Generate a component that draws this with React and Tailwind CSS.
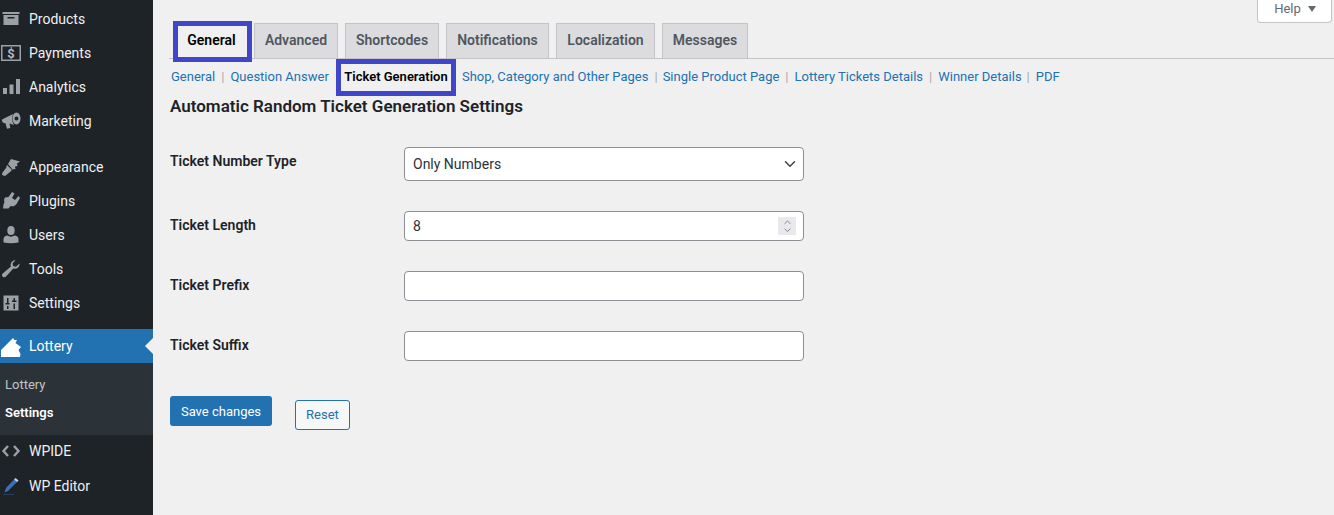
import { ChevronDown, ChevronUp } from 'lucide-react'

const Products = () => (
  <svg viewBox="0 0 20 20" className="w-5 h-5" fill="currentColor">
    <path d="M1.500 3h17v2h-17z" />
    <path fillRule="evenodd" d="M2.500 6h15v10h-15zM6.500 8v1.500h7V8z" />
  </svg>
)
const Payments = () => (
  <svg viewBox="0 0 20 20" className="w-5 h-5" fill="currentColor">
    <path fillRule="evenodd" d="M0 2h20v16H0zM1.500 3.500v13h17v-13z" />
    <text x="10" y="14.500" textAnchor="middle" fontSize="13" fontWeight="700" fill="#b4b8bc" fontFamily="Roboto">$</text>
  </svg>
)
const Analytics = () => (
  <svg viewBox="0 0 20 20" className="w-5 h-5" fill="currentColor">
    <path d="M2 11h4v6H2zM8.500 7.500h4V17h-4zM15 2h4v15h-4z" />
  </svg>
)
const Marketing = () => (
  <svg viewBox="0 0 20 20" className="w-5 h-5" fill="currentColor">
    <path d="M1 8.500 12 3c-1.300 3.500-1.300 7.500 1 11l-4.500-1.500.8 4.500-3.300.8-1.500-5.500C2 12.500 0.500 10.500 1 8.500z" />
    <path fillRule="evenodd" d="M15.500 1.500c2.200 0 4 2.800 4 6s-1.800 6-4 6-4-2.800-4-6 1.800-6 4-6zM15.500 5.500a2 2 0 1 0 0 4 2 2 0 0 0 0-4z" />
  </svg>
)
const Appearance = () => (
  <svg viewBox="0 0 20 20" className="w-5 h-5" fill="currentColor">
    <path d="M10 2l9 2.500-3 2 .5 2.500-2.500.5.500 2.500-3 .5L7 7z" />
    <path d="M6 8l5 5-2 2-5 4-3-1 .5-2.500L5 11z" />
  </svg>
)
const Plugins = () => (
  <svg viewBox="0 0 20 20" className="w-5 h-5" fill="currentColor">
    <path d="M11 1l2.500 1.500-2.500 4.500 3 2 3.500-4 1.500 2-3.500 6c-1.500 2-4 2.800-6 2l-2 2.500H2l.5-4L3.500 11c-.7-1.500-.5-3 .5-4.500L7.500 6z" />
  </svg>
)
const Users = () => (
  <svg viewBox="0 0 20 20" className="w-5 h-5" fill="currentColor">
    <ellipse cx="10" cy="5.500" rx="3.700" ry="4.500" />
    <path d="M2.500 17.500v-3.500c0-2 2-3.500 4-3.500 2 1.500 5 1.500 7 0 2 0 4 1.500 4 3.500v3.500c-4.500 1-10.500 1-15 0z" />
  </svg>
)
const Tools = () => (
  <svg viewBox="0 0 20 20" className="w-5 h-5" fill="currentColor">
    <path d="M18.500 4.500c.3 2.500-1.500 5-4 5.200-.8.100-1.500 0-2.200-.3L5 17.500c-1 1-2.400 1-3.300.2-.9-.9-.9-2.300 0-3.200l8.200-7c-.3-.7-.4-1.500-.3-2.300.3-2.300 2.500-4.200 5-4l-3 3 .5 2.800 2.800.7z" />
  </svg>
)
const Settings = () => (
  <svg viewBox="0 0 20 20" className="w-5 h-5" fill="currentColor">
    <path fillRule="evenodd" d="M2.500 2.500h15v15h-15zM6 5v5H4.500v1.500h4V10H7.500V5zM12.500 5v2.500H11V9h4.500V7.500H14V5zM6 13v3h1.500v-3zM12.500 10.500V16H14v-5.500z" />
  </svg>
)
const Ticket = () => (
  <svg viewBox="0 0 22 22" className="w-[22px] h-[22px]" fill="currentColor">
    <path d="M1 22v-7L13 3l1.500 2H17l-1.500 3L21 12l-2.500 3 2 4-.5 3z" />
  </svg>
)
const Code = () => (
  <svg viewBox="0 0 20 20" className="w-5 h-5" fill="none" stroke="currentColor" strokeWidth="2.400">
    <path d="M7 5l-4.500 5L7 15M13 5l4.500 5L13 15" />
  </svg>
)
const Pencil = () => (
  <svg viewBox="0 0 20 20" className="w-5 h-5">
    <path d="M14.500 2l3 2.500L7 15l-3.500 1.500L5 12z" fill="#3a6fc0" />
    <path d="M14.500 2l3 2.500-1.500 1.500-3-2.500z" fill="#c6cbd2" />
    <path d="M2 18h11v1H2z" fill="#2a3f5f" />
  </svg>
)

const menuTop = [
  ['Products', Products],
  ['Payments', Payments],
  ['Analytics', Analytics],
  ['Marketing', Marketing],
]
const menuMid = [
  ['Appearance', Appearance],
  ['Plugins', Plugins],
  ['Users', Users],
  ['Tools', Tools],
  ['Settings', Settings],
]

function MenuItem({ label, Icon }) {
  return (
    <div className="flex items-center h-[34px] text-[#f0f0f1]">
      <div className="w-[20px] ml-[1px] mr-[8px] flex justify-center text-[#9ca1a6] shrink-0">
        <Icon />
      </div>
      <span>{label}</span>
    </div>
  )
}

function Sidebar() {
  return (
    <div className="w-[153px] shrink-0 bg-[#1d2327] pt-[2px] text-[14px]">
      {menuTop.map(([label, Icon]) => <MenuItem key={label} label={label} Icon={Icon} />)}
      <div className="h-[12px]" />
      {menuMid.map(([label, Icon]) => <MenuItem key={label} label={label} Icon={Icon} />)}
      <div className="h-[9px]" />
      <div className="relative flex items-center h-[34px] bg-[#2271b1] text-white">
        <div className="w-[29px] flex justify-start shrink-0">
          <Ticket />
        </div>
        <span>Lottery</span>
        <div className="absolute right-0 top-[9px] w-0 h-0 border-y-[8px] border-y-transparent border-r-[8px] border-r-[#f0f0f1]" />
      </div>
      <div className="h-[72px] bg-[#2c3338] pt-[8px] pl-[5px] text-[13px]">
        <div className="h-[28px] flex items-center text-[#c3c4c7]">Lottery</div>
        <div className="h-[28px] flex items-center font-semibold text-white">Settings</div>
      </div>
      <div className="-mt-[1px]">
        <MenuItem label="WPIDE" Icon={Code} />
      </div>
      <div className="mt-[1px]">
        <MenuItem label="WP Editor" Icon={Pencil} />
      </div>
    </div>
  )
}

const tabs = [
  ['Advanced', 'w-[84px] ml-[2px]'],
  ['Shortcodes', 'w-[94px] ml-[7px]'],
  ['Notifications', 'w-[103px] ml-[7px]'],
  ['Localization', 'w-[99px] ml-[7px]'],
  ['Messages', 'w-[86px] ml-[7px]'],
]

function Tabs() {
  return (
    <div className="flex h-[38px] ml-[16px] pl-[4px] border-b border-[#c3c4c7] text-[14px] font-semibold">
      <div className="relative z-10 w-[79px] h-[41px] border-[5px] border-[#3f47c8] bg-[#f0f0f1] pb-[2px] pr-[2px] flex items-center justify-center text-black">
        General
      </div>
      {tabs.map(([label, cls]) => (
        <div
          key={label}
          className={`${cls} mt-[2px] h-[36px] pb-[2px] border border-[#c3c4c7] bg-[#dcdcde] flex items-center justify-center text-[#50575e]`}
        >
          {label}
        </div>
      ))}
    </div>
  )
}

const Sep = ({ className }) => <span className={`text-[#a7aaad] ${className}`}>|</span>

function SubNav() {
  return (
    <div className="flex items-center h-[37px] pb-[2px] ml-[18px] text-[13px] text-[#2271b1] whitespace-nowrap">
      <span>General</span>
      <Sep className="mx-[6px]" />
      <span>Question Answer</span>
      <Sep className="ml-[7px] -mr-[3px]" />
      <span className="relative z-10 self-start w-[120px] h-[37px] pb-[2px] border-[5px] border-[#3f47c8] flex items-center justify-center font-semibold text-black text-[13px]">
        Ticket Generation
      </span>
      <span className="ml-[6px]">Shop, Category and Other Pages</span>
      <Sep className="mx-[6px]" />
      <span className="-ml-[1px]">Single Product Page</span>
      <Sep className="mx-[6px]" />
      <span>Lottery Tickets Details</span>
      <Sep className="mx-[6px]" />
      <span>Winner Details</span>
      <Sep className="ml-[5px] mr-[6px]" />
      <span>PDF</span>
    </div>
  )
}

function Row({ label, children, className }) {
  return (
    <div className={`flex items-start ${className}`}>
      <div className="w-[234px] shrink-0 font-semibold text-[14px] text-[#1d2327] leading-[20px] pt-[4px]">{label}</div>
      {children}
    </div>
  )
}

const inputCls = 'w-[400px] h-[30px] block rounded-[4px] border border-[#8c8f94] bg-white px-[8px] text-[14px] text-[#2c3338] outline-none'

export default function App() {
  return (
    <div className="relative flex w-[1334px] h-[515px] overflow-hidden bg-[#f0f0f1] font-['Roboto',sans-serif]">
      <Sidebar />
      <div className="flex-1 pt-[21px]">
        <Tabs />
        <SubNav />
        <div className="ml-[17px]">
          <h1 className="text-[17px] font-semibold text-[#1d2327] leading-[20px]">
            Automatic Random Ticket Generation Settings
          </h1>
          <Row label="Ticket Number Type" className="mt-[31px]">
            <div className="relative">
              <select className={`${inputCls} h-[34px] appearance-none`} defaultValue="Only Numbers">
                <option>Only Numbers</option>
              </select>
              <ChevronDown size={18} strokeWidth={2} className="absolute right-[5px] top-[8px] text-[#3c434a]" />
            </div>
          </Row>
          <Row label="Ticket Length" className="mt-[30px]">
            <div className="relative">
              <input className={inputCls} defaultValue="8" readOnly />
              <div className="absolute right-[8px] top-[6px] w-[18px] h-[18px] bg-[#e9e9ed] flex flex-col items-center justify-center text-[#77777c]">
                <ChevronUp size={13} strokeWidth={2} className="-mb-[3px]" />
                <ChevronDown size={13} strokeWidth={2} />
              </div>
            </div>
          </Row>
          <Row label="Ticket Prefix" className="mt-[30px]">
            <input className={inputCls} readOnly />
          </Row>
          <Row label="Ticket Suffix" className="mt-[30px]">
            <input className={inputCls} readOnly />
          </Row>
          <div className="flex items-start mt-[35px]">
            <button className="w-[102px] h-[30px] pt-[1px] rounded-[3px] bg-[#2271b1] text-white text-[13px]">Save changes</button>
            <button className="w-[55px] h-[30px] mt-[4px] ml-[23px] rounded-[3px] border border-[#2271b1] bg-[#f6f7f7] text-[#2271b1] text-[13px]">Reset</button>
          </div>
        </div>
      </div>
      <div className="absolute right-[2px] top-0 w-[75px] h-[23px] pb-[4px] pl-[1px] bg-white border border-t-0 border-[#c3c4c7] rounded-b-[4px] flex items-center justify-center gap-[7px] text-[13px] text-[#646970]">
        <span>Help</span>
        <span className="w-0 h-0 border-x-[4px] border-x-transparent border-t-[6px] border-t-[#646970]" />
      </div>
    </div>
  )
}
